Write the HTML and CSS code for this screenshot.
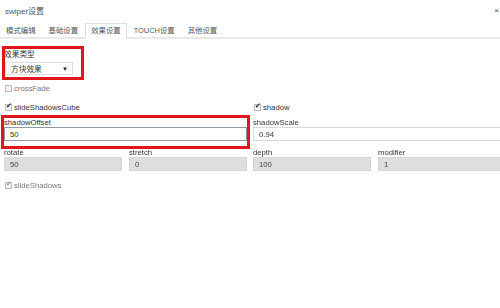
FILE: index.html
```html
<!DOCTYPE html>
<html>
<head>
	<meta charset="UTF-8">
	<title>swiper设置</title>
<link rel="stylesheet" href="styles.css">
</head>
<body>

<section class="dialog">
	<div class="head">
		<span class="title">swiper设置</span>
		<span class="close">×</span>
	</div>

	<ul class="tabs">
		<li class="tab">模式编辑</li>
		<li class="tab">基础设置</li>
		<li class="tab active">效果设置</li>
		<li class="tab">TOUCH设置</li>
		<li class="tab">其他设置</li>
	</ul>

	<div class="form">
		<!-- 效果类型 -->
		<div class="field type mark">
			<label>效果类型</label>
			<div class="select"><span>方块效果</span><i>▼</i></div>
		</div>

		<div class="row row-a">
			<label class="check off"><span class="box"></span>crossFade</label>
		</div>

		<div class="row row-b">
			<label class="check"><span class="box on"></span>slideShadowsCube</label>
			<label class="check"><span class="box on"></span>shadow</label>
		</div>

		<div class="row row-c">
			<div class="field mark">
				<label>shadowOffset</label>
				<input type="text" class="focus" value="50" autofocus>
			</div>
			<div class="field">
				<label>shadowScale</label>
				<input type="text" value="0.94">
			</div>
		</div>

		<div class="row row-d">
			<div class="pair">
				<div class="field">
					<label>rotate</label>
					<input type="text" value="50" disabled>
				</div>
				<div class="field">
					<label>stretch</label>
					<input type="text" value="0" disabled>
				</div>
			</div>
			<div class="pair">
				<div class="field">
					<label>depth</label>
					<input type="text" value="100" disabled>
				</div>
				<div class="field">
					<label>modifier</label>
					<input type="text" value="1" disabled>
				</div>
			</div>
		</div>

		<div class="row row-e">
			<label class="check off"><span class="box on"></span>slideShadows</label>
		</div>
	</div>
</section>

</body>
</html>
```

FILE: styles.css
```css
body,
ul {
	margin: 0;
	padding: 0;
}
ul {
	list-style: none;
}
input {
	outline: none;
}
html,
body {
	overflow: hidden;
	background: #fff;
}
.dialog {
	width: 500px;
	height: 308px;
	overflow: hidden;
	font-family: "Liberation Sans", "Noto Sans CJK SC", sans-serif;
	font-size: 7.7px;
	color: #333;
}
.head {
	display: flex;
	justify-content: space-between;
	align-items: center;
	height: 20px;
	padding: 0 1px 0 5px;
}
.title {
	font-size: 8px;
	color: #555;
}
.close {
	font-size: 8px;
	color: #444;
}
.tabs {
	display: flex;
	margin-top: 3px;
	border-bottom: 2px solid #e8e8e8;
	font-size: 7.4px;
}
.tab {
	line-height: 14px;
	padding: 0 5px 1px;
	margin-right: 1px;
	margin-bottom: -2px;
	border: 1px solid transparent;
	border-bottom: none;
	color: #555;
}
.tab.active {
	border-color: #ddd;
	background: #fff;
}
.form {
	padding: 10px 0 0 4px;
}
.mark {
	outline: 3px solid #e2151b;
	outline-offset: 0;
}
.field label {
	display: block;
	line-height: 9px;
}
.type {
	width: 76px;
	margin-left: 1px;
	padding-bottom: 2px;
}
.type label {
	line-height: 12px;
	margin-left: -1px;
}
.select {
	display: flex;
	justify-content: space-between;
	align-items: center;
	width: 68px;
	height: 13px;
	margin-top: 1px;
	padding: 0 4px 0 5px;
	box-sizing: border-box;
	border: 1px solid #ddd;
	background: #fff;
}
.select i {
	font-style: normal;
	font-size: 6px;
	color: #222;
}
.row {
	display: grid;
	grid-template-columns: 243px 260px;
	column-gap: 6px;
}
.row-a {
	margin-top: 5px;
}
.row-b {
	margin-top: 7px;
}
.row-c {
	margin-top: 5px;
}
.row-c .mark {
	padding-bottom: 5px;
	margin-bottom: -5px;
}
.row-d {
	margin-top: 7px;
}
.row-e {
	margin-top: 8px;
}
.pair {
	display: grid;
	grid-template-columns: 118px 1fr;
	column-gap: 7px;
}
.check {
	display: flex;
	align-items: center;
	height: 12px;
	margin-left: 1px;
}
.check.off {
	color: #777;
}
.box {
	position: relative;
	width: 5px;
	height: 5px;
	margin-right: 2px;
	border: 1px solid #bbb;
	background: #f4f4f4;
}
.box.on::after {
	content: "✔";
	position: absolute;
	left: 0;
	top: -3px;
	font-family: "DejaVu Sans", sans-serif;
	font-size: 7px;
	color: #222;
}
.off .box.on::after {
	color: #999;
}
input[type="text"] {
	display: block;
	width: 100%;
	height: 14px;
	box-sizing: border-box;
	margin: 0;
	padding: 0 5px;
	border: 1px solid #d8d8d8;
	background: #fff;
	font-family: inherit;
	font-size: 7.7px;
	color: #333;
}
input.focus {
	border-color: #8f9aa8;
}
input[disabled] {
	background: #dedede;
	border-color: #d6d6d6;
	color: #444;
}
```
